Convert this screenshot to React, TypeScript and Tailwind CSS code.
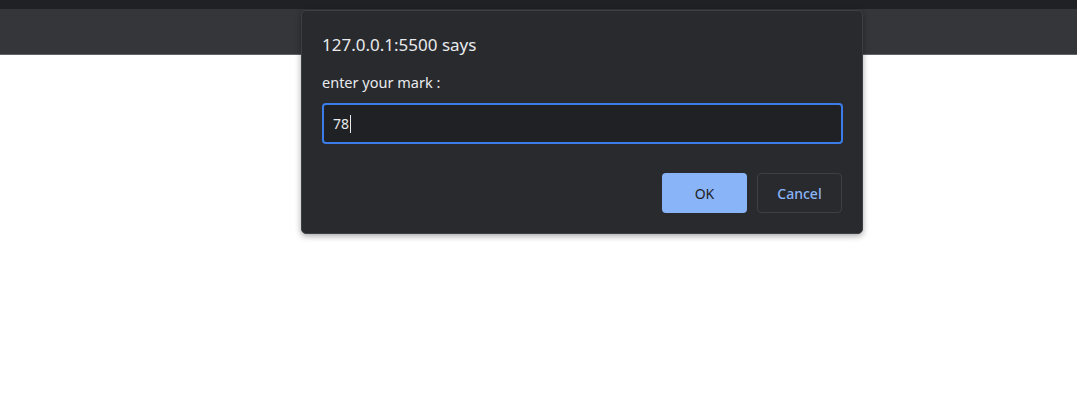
import React from 'react';

const App: React.FC = () => {
  return (
    <div className="relative w-[1077px] h-[401px] bg-white overflow-hidden" style={{ fontFamily: '"Segoe UI", "Noto Sans", "Open Sans", sans-serif' }}>
      {/* browser chrome */}
      <div className="h-[9px] bg-[#202124]" />
      <div className="h-[46px] bg-[#35363a] border-b border-[#5f6368]" />

      {/* prompt dialog */}
      <div className="absolute left-[301px] top-[10px] w-[562px] h-[224px] bg-[#292a2d] border border-[#3c4043] rounded-[5px] shadow-[0_2px_6px_rgba(0,0,0,0.35)] px-[20px] pt-[23px]">
        <div className="text-[17px] leading-[22px] text-[#e8eaed]">127.0.0.1:5500 says</div>
        <div className="mt-[16px] text-[14.5px] leading-[20px] text-[#e8eaed]">enter your mark :</div>
        <div className="mt-[11px] h-[41px] w-[521px] rounded-[4px] border-2 border-[#3b7ce9] bg-[#202124] flex items-center pl-[9px] text-[14px] text-[#e8eaed]">
          78<span className="ml-[1px] w-px h-[18px] bg-[#e8eaed]" />
        </div>
        <div className="mt-[29px] flex justify-end gap-[10px] w-[520px]">
          <button className="w-[85px] h-[40px] rounded-[4px] bg-[#8ab4f8] text-[#202124] text-[14px]">OK</button>
          <button className="w-[85px] h-[40px] rounded-[4px] border border-[#3c4043] text-[#8ab4f8] text-[14px] font-medium">Cancel</button>
        </div>
      </div>
    </div>
  );
};

export default App;
